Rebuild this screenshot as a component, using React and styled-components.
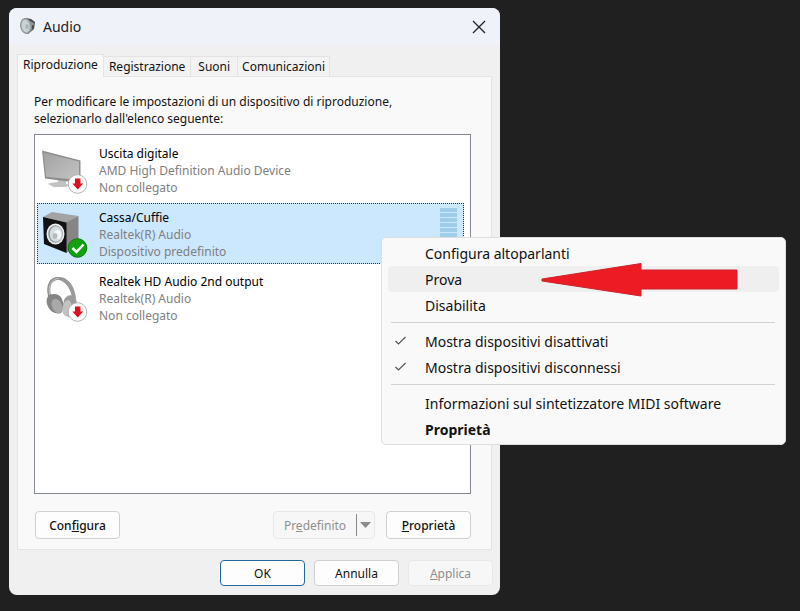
import React from "react";
import styled, { createGlobalStyle } from "styled-components";

const GlobalStyle = createGlobalStyle`
  * { box-sizing: border-box; }
  body {
    margin: 0;
    background: #202020;
    color: #111;
    font-family: "Noto Sans", "Open Sans", sans-serif;
    font-size: 12px;
    line-height: 17px;
  }
  button { font: inherit; color: inherit; }
`;

const Desktop = styled.main`
  min-height: 100vh;
  padding: 8px 9px 16px;
  overflow: hidden;
`;

const Dialog = styled.section`
  display: flex;
  flex-direction: column;
  width: calc(61vw + 3px);
  min-width: 460px;
  min-height: calc(100vh - 24px);
  background: #f0f0f0;
  border-radius: 8px;
`;

const TitleBar = styled.header`
  display: flex;
  align-items: center;
  gap: 7px;
  height: 37px;
  padding: 0 12px 0 11px;
  background: #f0f2fa;
  border-radius: 8px 8px 0 0;
`;

const Title = styled.h1`
  flex: 1;
  margin: 0;
  font-size: 14px;
  font-weight: 400;
  color: #222;
`;

const CloseButton = styled.button`
  display: flex;
  padding: 2px;
  border: 0;
  background: none;
`;

const TabList = styled.div`
  display: flex;
  align-items: flex-end;
  padding: 9px 8px 0;
`;

const Tab = styled.button`
  position: relative;
  height: ${(p) => (p.$active ? 23 : 20)}px;
  margin-bottom: ${(p) => (p.$active ? -1 : 0)}px;
  padding: 0 ${(p) => p.$pad}px ${(p) => (p.$active ? 4 : 0)}px;
  border: 1px solid #e4e4e4;
  border-left-width: ${(p) => (p.$active ? 1 : 0)}px;
  border-bottom: 0;
  background: ${(p) => (p.$active ? "#f9f9f9" : "#f3f3f3")};
  white-space: nowrap;
`;

const Panel = styled.div`
  display: flex;
  flex: 1;
  flex-direction: column;
  margin: 0 8px;
  padding: 16px 20px 10px 16px;
  border: 1px solid #e4e4e4;
  background: #f9f9f9;
`;

const Intro = styled.p`
  margin: 0 0 7px;
  padding-right: 40px;
`;

const DeviceList = styled.ul`
  display: flex;
  flex: 1;
  flex-direction: column;
  gap: 3px;
  margin: 0;
  padding: 4px 6px 3px 2px;
  border: 1px solid #828790;
  background: #fff;
  list-style: none;
`;

const Device = styled.li`
  position: relative;
  display: flex;
  gap: 11px;
  height: 61px;
  padding: 0 6px 0 2px;
  border: 1px dotted ${(p) => (p.$selected ? "#234" : "transparent")};
  background: ${(p) => (p.$selected ? "#cce8ff" : "transparent")};
`;

const DeviceText = styled.div`
  flex: 1;
  padding-top: 5px;
  color: #808080;
`;

const DeviceName = styled.div`
  color: #000;
`;

const Meter = styled.div`
  width: 17px;
  height: 50px;
  margin-top: 4px;
  background: repeating-linear-gradient(#9fcde8 0 4px, #cce8ff 4px 5px);
`;

const Row = styled.div`
  display: flex;
  gap: 11px;
  margin-top: 17px;
  padding-left: 1px;
`;

const Spacer = styled.span`
  flex: 1;
`;

const Footer = styled.footer`
  display: flex;
  justify-content: flex-end;
  gap: 9px;
  padding: 10px 7px 9px;
`;

const Button = styled.button`
  width: 85px;
  height: ${(p) => (p.$tall ? 28 : 26)}px;
  padding: 0;
  border: 1px solid ${(p) => (p.$primary ? "#1f6a9a" : "#d0d0d0")};
  border-radius: 4px;
  background: #fdfdfd;
  font-weight: ${(p) => (p.$strong ? 500 : 400)};
  &:disabled {
    border-color: #e8e8e8;
    background: #f7f7f7;
    color: #8f8f8f;
  }
`;

const SplitButton = styled(Button)`
  display: flex;
  align-items: center;
  width: 102px;
`;

const SplitLabel = styled.span`
  flex: 1;
`;

const SplitArrow = styled.span`
  display: flex;
  align-items: center;
  justify-content: center;
  width: 18px;
  height: 22px;
  border-left: 1px solid #8a8a8a;
`;

const Menu = styled.div`
  position: absolute;
  z-index: 2;
  top: 33px;
  left: 343px;
  width: 405px;
  padding: 2px 6px;
  border: 1px solid #dedede;
  border-radius: 5px;
  background: #f9f9f9;
  font-size: 14px;
`;

const MenuItem = styled.button`
  position: relative;
  display: grid;
  grid-template-columns: 37px 1fr;
  align-items: center;
  width: 100%;
  height: 26px;
  padding: 0;
  border: 0;
  border-radius: 4px;
  background: ${(p) => (p.$hover ? "#efefef" : "transparent")};
  font-weight: ${(p) => (p.$bold ? 700 : 400)};
  text-align: left;
`;

const CheckCell = styled.span`
  display: flex;
  padding-left: 6px;
`;

const Separator = styled.hr`
  height: 1px;
  margin: 4px 4px 5px 3px;
  border: 0;
  background: #d2d2d2;
`;

const Pointer = styled.svg`
  position: absolute;
  top: -4px;
  left: 152px;
`;

function SpeakerLogo() {
  return (
    <svg width="16" height="19" viewBox="0 0 16 19" aria-hidden="true">
      <path d="M6 1L11 2 15 5 14 12 8 17z" fill="#45494b" />
      <path d="M10 4l4 2v2l-4 1zM10 12l3-1-3 4z" fill="#8b9093" />
      <ellipse cx="6" cy="9" rx="5.300" ry="7.500" fill="#a9b1b4" stroke="#899194" transform="rotate(-10 6 9)" />
      <ellipse cx="5.500" cy="9" rx="3.800" ry="6" fill="#cbd3d5" transform="rotate(-10 5.500 9)" />
      <ellipse cx="7" cy="9.500" rx="1.600" ry="2.600" fill="#aab3b6" />
    </svg>
  );
}

function DownBadge() {
  return (
    <g>
      <circle cx="37.500" cy="44" r="9.300" fill="#fff" stroke="#b4b4b4" />
      <path d="M35 38.500h5.500v5h2.700L37.700 49.500 32.300 43.500H35z" fill="#e3101c" />
    </g>
  );
}

function MonitorIcon() {
  return (
    <svg width="48" height="54" viewBox="0 0 48 54" aria-hidden="true">
      <defs>
        <linearGradient id="screen" x1="0" y1="0" x2="1" y2="1">
          <stop offset="0" stopColor="#a2a2a2" />
          <stop offset="1" stopColor="#c4c4c4" />
        </linearGradient>
      </defs>
      <path d="M17 38l9 2v4l4 1-4 2H14l-6-3 2-1 8-1z" fill="#c2c2c2" />
      <path d="M2 10.500L40.500 20.500V39L36 42.500 5 38.500z" fill="#8d8d8d" />
      <path d="M3.500 12.500L39 21.500V40L6 36.800z" fill="url(#screen)" />
      <DownBadge />
    </svg>
  );
}

function SpeakerIcon() {
  return (
    <svg width="48" height="54" viewBox="0 0 48 54" aria-hidden="true">
      <path d="M3 13L12 8 38.500 12 26.500 18.500z" fill="#a3a3a3" />
      <path d="M26 18.500L38.500 12V40L26 49z" fill="#858585" />
      <path d="M3 13L26.500 18.500V49L4 40z" fill="#111" />
      <ellipse cx="15.500" cy="30" rx="9" ry="10.500" fill="#ececec" />
      <ellipse cx="15.500" cy="30" rx="7.300" ry="8.800" fill="#8d979b" />
      <ellipse cx="16" cy="30" rx="6.300" ry="7.800" fill="#d6dde0" />
      <ellipse cx="17.500" cy="30.500" rx="3.500" ry="4.500" fill="#f5f7f8" />
      <ellipse cx="15" cy="32" rx="2.500" ry="3" fill="#b3bdc1" />
      <circle cx="37.500" cy="44" r="9.300" fill="#13a10e" stroke="#0b7d0b" />
      <path d="M32.500 44l4 4 7-7.500" fill="none" stroke="#fff" strokeWidth="2.500" />
    </svg>
  );
}

function HeadphonesIcon() {
  return (
    <svg width="48" height="54" viewBox="0 0 48 54" aria-hidden="true">
      <path d="M10 30C6 16 12 10 19 10.500S33 18 34 32" fill="none" stroke="#8f8f8f" strokeWidth="3" />
      <path d="M22 11C29 14 33 21 34 31" fill="none" stroke="#9b9b9b" strokeWidth="4" />
      <path d="M10 29C7 17 12 10.500 19 10.500" fill="none" stroke="#c4c4c4" strokeWidth="1" />
      <path d="M9 27c5-2 11-1 13 4s2 11-1 14c-6 2-12-2-14-9-1-4 0-7 2-9z" fill="#858585" />
      <ellipse cx="17" cy="38" rx="5" ry="7.500" transform="rotate(-24 17 38)" fill="#a9a9a9" />
      <path d="M24 32c3-6 9-6 12-1 2 6-1 14-6 18-5 0-9-5-6-17z" fill="#9b9b9b" />
      <ellipse cx="27" cy="40" rx="4.500" ry="8" transform="rotate(10 27 40)" fill="#c2c2c2" />
      <DownBadge />
    </svg>
  );
}

function Tick() {
  return (
    <svg width="13" height="10" viewBox="0 0 13 10" aria-hidden="true">
      <path d="M1.500 5l3 3 7-7" fill="none" stroke="#555" strokeWidth="1.200" />
    </svg>
  );
}

function Entry({ children, checked, hover, bold, extra }) {
  return (
    <MenuItem
      role={checked ? "menuitemcheckbox" : "menuitem"}
      aria-checked={checked}
      $hover={hover}
      $bold={bold}
    >
      <CheckCell>{checked && <Tick />}</CheckCell>
      <span>{children}</span>
      {extra}
    </MenuItem>
  );
}

function ContextMenu() {
  return (
    <Menu role="menu">
      <Entry>Configura altoparlanti</Entry>
      <Entry
        hover
        extra={
          <Pointer width="199" height="36" viewBox="0 0 199 36" aria-hidden="true">
            <path
              d="M2 17L101 1.500V8H197V27H101V34L2 19z"
              fill="#ed1c24"
              stroke="#ce202a"
              strokeLinejoin="round"
            />
          </Pointer>
        }
      >
        Prova
      </Entry>
      <Entry>Disabilita</Entry>
      <Separator />
      <Entry checked>Mostra dispositivi disattivati</Entry>
      <Entry checked>Mostra dispositivi disconnessi</Entry>
      <Separator />
      <Entry>Informazioni sul sintetizzatore MIDI software</Entry>
      <Entry bold>Proprietà</Entry>
    </Menu>
  );
}

const devices = [
  { name: "Uscita digitale", driver: "AMD High Definition Audio Device", state: "Non collegato", Icon: MonitorIcon },
  { name: "Cassa/Cuffie", driver: "Realtek(R) Audio", state: "Dispositivo predefinito", Icon: SpeakerIcon, selected: true },
  { name: "Realtek HD Audio 2nd output", driver: "Realtek(R) Audio", state: "Non collegato", Icon: HeadphonesIcon },
];

const tabs = [
  { name: "Riproduzione", pad: 5, active: true },
  { name: "Registrazione", pad: 5 },
  { name: "Suoni", pad: 7 },
  { name: "Comunicazioni", pad: 4 },
];

export default function App() {
  return (
    <Desktop>
      <GlobalStyle />
      <Dialog role="dialog" aria-labelledby="dialog-title">
        <TitleBar>
          <SpeakerLogo />
          <Title id="dialog-title">Audio</Title>
          <CloseButton aria-label="Chiudi">
            <svg width="14" height="14" viewBox="0 0 14 14" aria-hidden="true">
              <path d="M1 1l12 12M13 1L1 13" stroke="#222" strokeWidth="1.300" />
            </svg>
          </CloseButton>
        </TitleBar>
        <TabList role="tablist">
          {tabs.map(({ name, pad, active }) => (
            <Tab key={name} role="tab" aria-selected={!!active} $active={active} $pad={pad}>
              {name}
            </Tab>
          ))}
        </TabList>
        <Panel role="tabpanel">
          <Intro>
            Per modificare le impostazioni di un dispositivo di riproduzione, selezionarlo dall'elenco seguente:
          </Intro>
          <DeviceList>
            {devices.map(({ name, driver, state, Icon, selected }) => (
              <Device key={name} $selected={selected}>
                <Icon />
                <DeviceText>
                  <DeviceName>{name}</DeviceName>
                  <div>{driver}</div>
                  <div>{state}</div>
                </DeviceText>
                {selected && <Meter />}
                {selected && <ContextMenu />}
              </Device>
            ))}
          </DeviceList>
          <Row>
            <Button $tall $strong>Con<u>f</u>igura</Button>
            <Spacer />
            <SplitButton $tall disabled>
              <SplitLabel>Pr<u>e</u>definito</SplitLabel>
              <SplitArrow>
                <svg width="11" height="6" viewBox="0 0 11 6" aria-hidden="true">
                  <path d="M0 0h11L5.500 6z" fill="#8a8a8a" />
                </svg>
              </SplitArrow>
            </SplitButton>
            <Button $tall $strong><u>P</u>roprietà</Button>
          </Row>
        </Panel>
        <Footer>
          <Button $primary>OK</Button>
          <Button>Annulla</Button>
          <Button disabled><u>A</u>pplica</Button>
        </Footer>
      </Dialog>
    </Desktop>
  );
}
